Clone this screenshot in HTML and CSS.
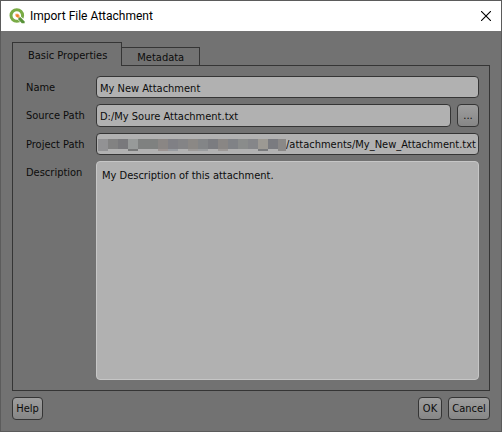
FILE: index.html
```
<!DOCTYPE html>
<html lang="en">
<head>
<meta charset="utf-8">
<title>Import File Attachment</title>
<link rel="stylesheet" href="styles.css">
</head>
<body>
<main class="dialog">
  <header class="titlebar">
    <svg class="logo" viewBox="0 0 16 16" aria-hidden="true">
      <circle cx="7.8" cy="7.5" r="5.8" fill="none" stroke="#79ab45" stroke-width="3"/>
      <path d="M9 8.8 15.5 15" stroke="#fff" stroke-width="4.6"/>
      <path d="M9.4 9.2h2.2l4 4.2v1.8h-2.8L9.4 11.6z" fill="#579238"/>
      <path d="M6.4 5.8h2.6l1.6 1.6v2.4H8.4L6.4 8z" fill="#f4a45c"/>
      <path d="M7.4 6.8h2v2h-2z" fill="#ee7822"/>
    </svg>
    <h1 class="title">Import File Attachment</h1>
    <button class="close" type="button" aria-label="Close">
      <svg viewBox="0 0 10 10" width="10" height="10"><path d="M0 0 10 10M10 0 0 10" stroke="#000" stroke-width="1.1"/></svg>
    </button>
  </header>
  <form class="content">
    <div class="tabs" role="tablist">
      <button class="tab tab-active" type="button" role="tab" aria-selected="true">Basic Properties</button>
      <button class="tab" type="button" role="tab" aria-selected="false">Metadata</button>
    </div>
    <section class="panel">
      <label for="name">Name</label>
      <input class="field" id="name" type="text" value="My New Attachment">
      <label for="source">Source Path</label>
      <div class="source">
        <input class="field" id="source" type="text" value="D:/My Soure Attachment.txt">
        <button class="button browse" type="button">...</button>
      </div>
      <label for="project">Project Path</label>
      <div class="field project">
        <svg class="mosaic" viewBox="0 0 188 12" shape-rendering="crispEdges" aria-hidden="true">
          <path fill="#929294" d="M0 0h10v12H0z"/>
          <path fill="#828282" d="M10 0h10v10H10z"/>
          <path fill="#79797c" d="M20 0h10v10H20z"/>
          <path fill="#979a99" d="M30 0h10v10H30z"/>
          <path fill="#777878" d="M30 10h10v2H30z"/>
          <path fill="#7f8180" d="M40 0h20v10H40z"/>
          <path fill="#8a8684" d="M60 0h10v10H60z"/>
          <path fill="#9c9492" d="M60 10h10v2H60z"/>
          <path fill="#808085" d="M70 0h10v10H70z"/>
          <path fill="#989ba0" d="M70 10h10v2H70z"/>
          <path fill="#848486" d="M80 0h10v10H80z"/>
          <path fill="#8b8885" d="M90 0h10v10H90z"/>
          <path fill="#9d9a98" d="M90 10h10v2H90z"/>
          <path fill="#838587" d="M100 0h10v10h-10z"/>
          <path fill="#9a9c9e" d="M100 10h10v2h-10z"/>
          <path fill="#7b7c80" d="M110 0h10v10h-10z"/>
          <path fill="#898684" d="M120 0h10v10h-10z"/>
          <path fill="#9c9896" d="M120 10h10v2h-10z"/>
          <path fill="#808286" d="M130 0h10v10h-10z"/>
          <path fill="#8a8c8b" d="M140 0h10v10h-10z"/>
          <path fill="#858689" d="M150 0h10v10h-10z"/>
          <path fill="#9c9993" d="M160 0h10v10h-10z"/>
          <path fill="#797a7c" d="M160 10h10v2h-10z"/>
          <path fill="#7a7b80" d="M170 0h10v10h-10z"/>
          <path fill="#8a8887" d="M180 0h8v12h-8z"/>
        </svg>
        <input class="path" id="project" type="text" value="/attachments/My_New_Attachment.txt">
      </div>
      <label for="description">Description</label>
      <textarea class="description" id="description">My Description of this attachment.</textarea>
    </section>
    <footer class="actions">
      <button class="button help" type="button">Help</button>
      <button class="button ok" type="submit">OK</button>
      <button class="button cancel" type="button">Cancel</button>
    </footer>
  </form>
</main>
</body>
</html>
```
FILE: styles.css
```
* { box-sizing: border-box; }

body {
  margin: 0;
  background: #727272;
  color: #0c0c0c;
  font: 11px/16px "DejaVu Sans Condensed", "DejaVu Sans", sans-serif;
}

button, input, textarea {
  margin: 0;
  padding: 0;
  border: 0;
  background: none;
  color: inherit;
  font: inherit;
  outline: 0;
}

.dialog {
  display: flex;
  flex-direction: column;
  min-height: 100vh;
  border: 1px solid #5b5b5b;
}

.titlebar {
  display: flex;
  align-items: center;
  height: 30px;
  padding: 0 10px 0 8px;
  background: #fff;
  color: #000;
}

.logo { width: 16px; height: 16px; }

.title {
  flex: 1;
  margin: 0 0 0 5px;
  font: 12px/16px Roboto, sans-serif;
}

.close { display: flex; }

.content {
  flex: 1;
  display: flex;
  flex-direction: column;
  padding: 11px;
}

.tabs { display: flex; align-items: flex-end; }

.tab {
  height: 18px;
  padding: 2px 15px 0;
  border: 1px solid #353535;
  border-width: 1px 1px 0 0;
}

.tab-active {
  z-index: 1;
  height: 24px;
  margin-bottom: -1px;
  padding: 2px 14px 0 15px;
  border-left-width: 1px;
  background: #727272;
}

.panel {
  flex: 1;
  display: grid;
  grid-template-columns: 70px 1fr;
  grid-template-rows: 22px 23px 22px 1fr;
  row-gap: 6px;
  padding: 10px 10px 10px 13px;
  border: 1px solid #353535;
}

.panel label { padding-top: 4px; }

.field {
  width: 100%;
  min-width: 0;
  height: 100%;
  padding: 2px 3px 0;
  border: 1px solid #353535;
  border-radius: 4px;
  background: #b1b1b1;
}

.source { display: flex; gap: 6px; }

.project { display: flex; align-items: center; padding: 2px 1px 0; }

.mosaic { flex: none; width: 188px; height: 12px; }

.path { flex: 1; min-width: 0; }

.description {
  width: 100%;
  padding: 6px 5px;
  border: 1px solid #c6c6c6;
  border-radius: 4px;
  background: #b1b1b1;
  resize: none;
}

.button {
  height: 23px;
  border: 1px solid #353535;
  border-radius: 4px;
  background: linear-gradient(#9e9e9e, #868686);
}

.browse { flex: none; width: 22px; }

.actions { display: flex; gap: 6px; padding-top: 6px; }

.help { width: 31px; margin-right: auto; }
.ok { width: 24px; }
.cancel { width: 42px; }
```
